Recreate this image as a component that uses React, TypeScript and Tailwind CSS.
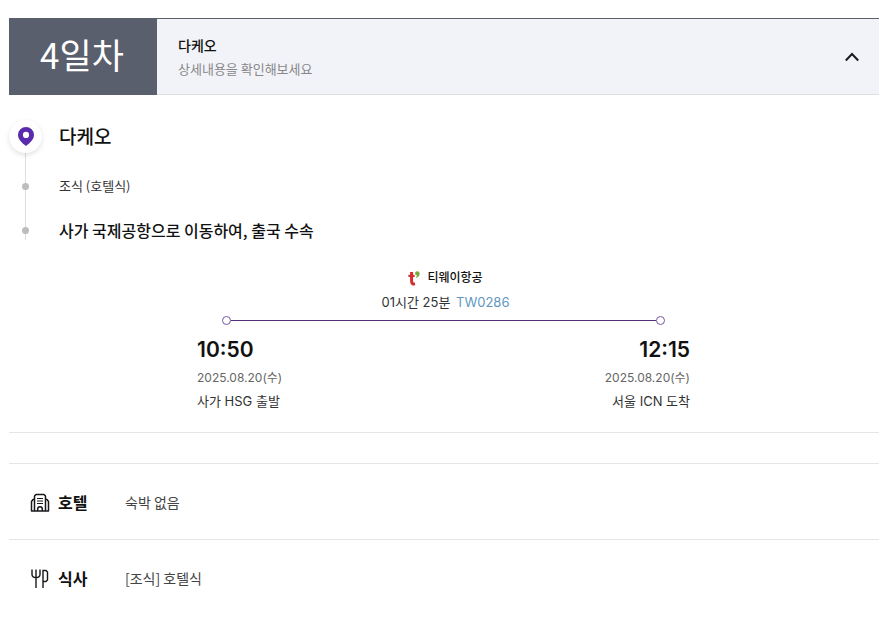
import { useState } from "react";
import type { ReactNode } from "react";

function PinIcon() {
  return (
    <svg width="16" height="19" viewBox="0 0 16 19" aria-hidden="true">
      <path
        fillRule="evenodd"
        fill="#5a2cad"
        d="M8 0a8 8 0 0 0-8 8c0 4.400 4 8 8 11 4-3 8-6.600 8-11a8 8 0 0 0-8-8Zm0 4.800a3.100 3.100 0 1 1 0 6.200 3.100 3.100 0 0 1 0-6.200Z"
      />
    </svg>
  );
}

function ChevronIcon({ open }: { open: boolean }) {
  return (
    <svg
      width="14"
      height="10"
      viewBox="0 0 14 10"
      fill="none"
      stroke="#1a1a1f"
      strokeWidth="2"
      aria-hidden="true"
      className={open ? "" : "rotate-180"}
    >
      <path d="M0.800 8.500 7 2l6.200 6.500" />
    </svg>
  );
}

function AirlineLogo() {
  return (
    <svg width="12" height="15" viewBox="0 0 12 15" fill="none" aria-hidden="true">
      <path d="M3.600 1v9.600c0 2 1.200 2.600 3.400 2.200" stroke="#d0302f" strokeWidth="3" />
      <path d="M0.400 4.900h6.200" stroke="#d0302f" strokeWidth="2.200" />
      <path d="M9.200 0.300c1.500 0 2.500 1 2.500 2.500 0 2-1.400 3.400-3.500 4l-.4-.9c.9-.4 1.400-.9 1.500-1.500-1.300 0-2.200-.8-2.200-2S8 .3 9.200.3Z" fill="#78ad3d" />
    </svg>
  );
}

function HotelIcon() {
  return (
    <svg width="20" height="20" viewBox="0 -1 20 20" fill="none" stroke="#18181b" strokeWidth="1.500" strokeLinejoin="round" aria-hidden="true">
      <path d="M4.500 18V3L6 1.500h8L15.500 3v15" />
      <path d="M4.500 6.500H3L1.500 8.500V18h17V8.500L17 6.500h-1.500" />
      <path d="M7 5.500h6M7 8h6M7 10.500h6" strokeWidth="1.200" />
      <path d="M7.700 18v-2a2.300 2.300 0 0 1 4.600 0v2" />
    </svg>
  );
}

function MealIcon() {
  return (
    <svg width="20" height="20" viewBox="0 0 20 20" fill="none" stroke="#18181b" strokeWidth="1.400" aria-hidden="true">
      <path d="M2 1.500v5c0 2 1 3 4 3s4-1 4-3v-5" />
      <path d="M6 1.500V20" />
      <path d="M13 20V2.500h3l1.500 1.500v8L16 13.500h-3" />
    </svg>
  );
}

function Stop({ children, first = false }: { children: ReactNode; first?: boolean }) {
  return (
    <li className={first ? "flex h-14 items-center gap-[17px]" : "flex h-11 items-center gap-[17px]"}>
      <span className="z-10 flex w-[33px] shrink-0 justify-center">
        {first ? (
          <span className="flex size-[33px] items-center justify-center rounded-full bg-white shadow-[0_2px_5px_rgba(0,0,0,0.12)]">
            <PinIcon />
          </span>
        ) : (
          <span className="size-[7px] rounded-full bg-[#bdbdbd]" />
        )}
      </span>
      {children}
    </li>
  );
}

function Terminal({ time, place, end = false }: { time: string; place: string; end?: boolean }) {
  return (
    <div className={end ? "text-right" : "text-left"}>
      <p className="text-[21px] leading-8 font-semibold text-[#111]">{time}</p>
      <p className="text-xs leading-6 text-[#666]">2025.08.20(수)</p>
      <p className="text-[13px] leading-[22px] text-[#333]">{place}</p>
    </div>
  );
}

function InfoRow({ icon, label, value }: { icon: ReactNode; label: string; value: string }) {
  return (
    <div className="flex h-[76px] items-center border-t border-[#e5e5e5] pl-[21px]">
      {icon}
      <dt className="ml-2 w-[67px] text-base font-bold text-[#111]">{label}</dt>
      <dd className="text-sm text-[#444]">{value}</dd>
    </div>
  );
}

export default function App() {
  const [open, setOpen] = useState(true);

  return (
    <main className="bg-white pt-[18px] pr-4 pb-6 pl-[9px] font-['Inter','Noto_Sans_CJK_KR',sans-serif] text-[#111]">
      <button
        type="button"
        aria-expanded={open}
        onClick={() => setOpen(!open)}
        className="flex h-[77px] w-full items-stretch border-t border-[#5a5f6d] bg-[#f2f3f8] text-left"
      >
        <span className="flex w-[148px] shrink-0 items-center justify-center bg-[#5a5f6d] pr-0.5 pb-2 font-['Noto_Sans_CJK_KR',sans-serif] text-[35px] leading-none text-white">
          4일차
        </span>
        <span className="flex grow items-center justify-between border-b border-[#dedfe2] pr-5 pl-[21px] font-['Noto_Sans_CJK_KR',sans-serif]">
          <span className="flex flex-col">
            <span className="text-sm leading-6 font-medium">다케오</span>
            <span className="text-[13px] leading-6 text-[#888]">상세내용을 확인해보세요</span>
          </span>
          <ChevronIcon open={open} />
        </span>
      </button>

      {open && (
        <>
          <section className="border-b border-[#e5e5e5] pt-[13px] pb-5">
            <div className="relative font-['Noto_Sans_CJK_KR',sans-serif]">
              <div aria-hidden="true" className="absolute top-11 bottom-3 left-4 w-px bg-[#dedede]" />
              <ol>
                <Stop first>
                  <h2 className="text-[19px] font-medium">다케오</h2>
                </Stop>
                <Stop>
                  <p className="text-[13px] text-[#333]">조식 (호텔식)</p>
                </Stop>
                <Stop>
                  <h3 className="text-base font-medium">사가 국제공항으로 이동하여, 출국 수속</h3>
                </Stop>
              </ol>
            </div>

            <div className="pr-[189px] pl-[188px]">
              <div className="pt-[14px] pl-1 text-center">
                <p className="flex items-center justify-center gap-[7px] text-xs leading-6 font-medium">
                  <AirlineLogo />
                  티웨이항공
                </p>
                <p className="text-[13px] leading-6 text-[#333]">
                  01시간 25분 <span className="ml-0.5 text-[#6296bf]">TW0286</span>
                </p>
              </div>
              <div className="flex items-center px-[25px] pt-0.5 pb-[9px]">
                <span className="size-[9px] rounded-full border border-[#7556a5] bg-white" />
                <span className="h-px grow bg-[#563078]" />
                <span className="size-[9px] rounded-full border border-[#7556a5] bg-white" />
              </div>
              <div className="flex justify-between">
                <Terminal time="10:50" place="사가 HSG 출발" />
                <Terminal time="12:15" place="서울 ICN 도착" end />
              </div>
            </div>
          </section>

          <dl className="mt-[30px] font-['Noto_Sans_CJK_KR',sans-serif]">
            <InfoRow icon={<HotelIcon />} label="호텔" value="숙박 없음" />
            <InfoRow icon={<MealIcon />} label="식사" value="[조식] 호텔식" />
          </dl>
        </>
      )}
    </main>
  );
}
